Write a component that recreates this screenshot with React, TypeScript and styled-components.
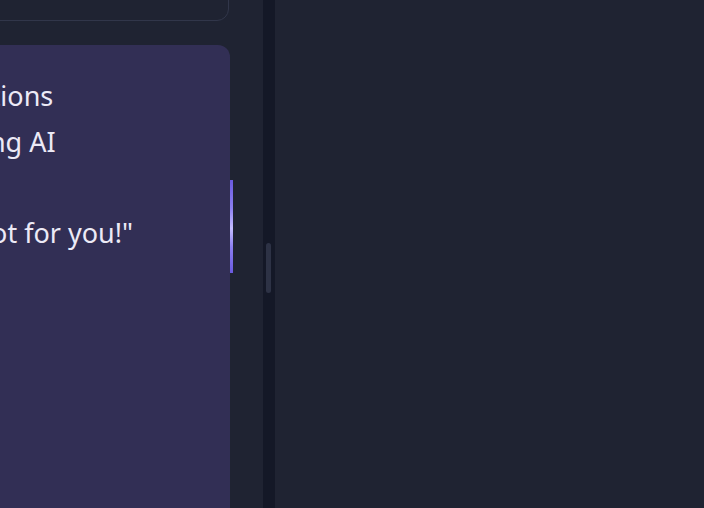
import React from "react";
import styled, { createGlobalStyle } from "styled-components";

const Global = createGlobalStyle`
  html, body { margin: 0; padding: 0; background: #1f2332; overflow: hidden; }
  #root { height: 508px; }
`;

const Shell = styled.div`
  display: flex;
  height: 508px;
  overflow: hidden;
  background: #1f2332;
  font-family: "Noto Sans", "Open Sans", sans-serif;
`;

const Sidebar = styled.aside`
  width: 263px;
  flex: none;
  display: flex;
  flex-direction: column;
  gap: 24px;
  padding-right: 33px;
  box-sizing: border-box;
`;

const SearchCard = styled.div`
  margin: -40px 1px 0 -174px;
  height: 61px;
  box-sizing: border-box;
  border: 1.5px solid #31364a;
  border-radius: 12px;
`;

const PromptCard = styled.div`
  position: relative;
  margin: 0 0 -20px -174px;
  flex: 1;
  background: #322f55;
  border-radius: 12px;
  padding: 28px 0 0 24px;
  color: #eceaf6;
  font-size: 27px;
  line-height: 45.5px;
`;

const Line = styled.div`
  white-space: nowrap;
  min-height: 45.5px;
`;

const Accent = styled.div`
  position: absolute;
  right: -3px;
  top: 135px;
  width: 3.5px;
  height: 93px;
  background: linear-gradient(180deg, #6a5ae0 0%, #8b7ef0 30%, #c4bcff 52%, #8b7ef0 72%, #6a5ae0 100%);
`;

const Divider = styled.div`
  position: relative;
  width: 12px;
  flex: none;
  background: #141827;
`;

const Handle = styled.div`
  position: absolute;
  left: 3px;
  top: 243px;
  width: 4.5px;
  height: 50px;
  border-radius: 3px;
  background: #2d3245;
`;

const Main = styled.main`
  flex: 1;
  background: #1f2332;
`;

export default function App() {
  return (
    <Shell>
      <Global />
      <Sidebar>
        <SearchCard />
        <PromptCard>
          <Line>Quick questions</Line>
          <Line>Start chatting AI</Line>
          <Line />
          <Line>"I've got a lot for you!"</Line>
          <Accent />
        </PromptCard>
      </Sidebar>
      <Divider>
        <Handle />
      </Divider>
      <Main />
    </Shell>
  );
}
